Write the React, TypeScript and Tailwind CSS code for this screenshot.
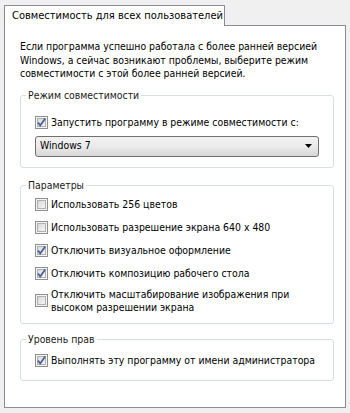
import React from "react"

const font = { fontFamily: '"DejaVu Sans Condensed", "DejaVu Sans", Tahoma, sans-serif' }

function CheckBox({ checked }: { checked: boolean }) {
  return (
    <svg width="13" height="13" viewBox="0 0 13 13" className="shrink-0">
      <defs>
        <linearGradient id="cbg" x1="0" y1="0" x2="1" y2="1">
          <stop offset="0" stopColor="#d8d8d8" />
          <stop offset="1" stopColor="#f7f7f7" />
        </linearGradient>
      </defs>
      <rect x="0.5" y="0.5" width="12" height="12" fill="#f4f4f4" stroke="#8e8f8f" />
      <rect x="2.5" y="2.5" width="8" height="8" fill="url(#cbg)" stroke="#b0b0b0" />
      {checked && (
        <path d="M3 6.5 L5.2 9.5 L10.2 2.5" fill="none" stroke="#4a5f97" strokeWidth="1.8" />
      )}
    </svg>
  )
}

function Option({ checked, children }: { checked: boolean; children: React.ReactNode }) {
  return (
    <div className="flex items-center gap-[3px] leading-[13px]">
      <CheckBox checked={checked} />
      <span>{children}</span>
    </div>
  )
}

function Group({ title, children, className }: { title: string; children: React.ReactNode; className?: string }) {
  return (
    <fieldset className={"border border-[#d5dfe5] rounded-[3px] p-0 m-0 " + (className || "")}>
      <legend className="ml-[5px] px-[2px] leading-[13px] text-[#1a1a1a]">{title}</legend>
      {children}
    </fieldset>
  )
}

export default function App() {
  return (
    <div className="w-[350px] h-[413px] bg-[#f0f0f0] pl-[4px] pt-[5px] text-[10.4px] text-black" style={font}>
      {/* Tab */}
      <div className="relative z-10 -mb-px w-[221px] h-[21px] bg-white border border-b-0 border-[#898c95] pl-[7px] leading-[19px] text-[11px]">
        Совместимость для всех пользователей
      </div>

      {/* Page */}
      <div className="w-[342px] h-[383px] bg-white border border-[#898c95] pl-[15px] pr-[11px] pt-[14px]">
        <p className="leading-[13.5px]">
          Если программа успешно работала с более ранней версией Windows, а сейчас возникают проблемы, выберите режим совместимости с этой более ранней версией.
        </p>

        <Group title="Режим совместимости" className="mt-[8px]">
          <div className="px-[14px] pt-[14px] pb-[10px]">
            <Option checked>Запустить программу в режиме совместимости с:</Option>
            <div className="mt-[7px] h-[21px] flex items-center justify-between rounded-[3px] border border-[#707070] bg-gradient-to-b from-[#f2f2f2] via-[#ebebeb] to-[#d6d6d6] pl-[4px] pr-[6px]">
              <span>Windows 7</span>
              <svg width="7" height="4" viewBox="0 0 7 4">
                <path d="M0 0 H7 L3.5 4 Z" fill="#000" />
              </svg>
            </div>
          </div>
        </Group>

        <Group title="Параметры" className="mt-[11px]">
          <div className="px-[14px] pt-[6px] pb-[9px] flex flex-col gap-[10px]">
            <Option checked={false}>Использовать 256 цветов</Option>
            <Option checked={false}>Использовать разрешение экрана 640 x 480</Option>
            <Option checked>Отключить визуальное оформление</Option>
            <Option checked>Отключить композицию рабочего стола</Option>
            <div className="-mt-[2px]">
              <Option checked={false}>
                Отключить масштабирование изображения при
                <br />
                высоком разрешении экрана
              </Option>
            </div>
          </div>
        </Group>

        <Group title="Уровень прав" className="mt-[9px]">
          <div className="px-[14px] pt-[8px] pb-[13px]">
            <Option checked>Выполнять эту программу от имени администратора</Option>
          </div>
        </Group>
      </div>
    </div>
  )
}
